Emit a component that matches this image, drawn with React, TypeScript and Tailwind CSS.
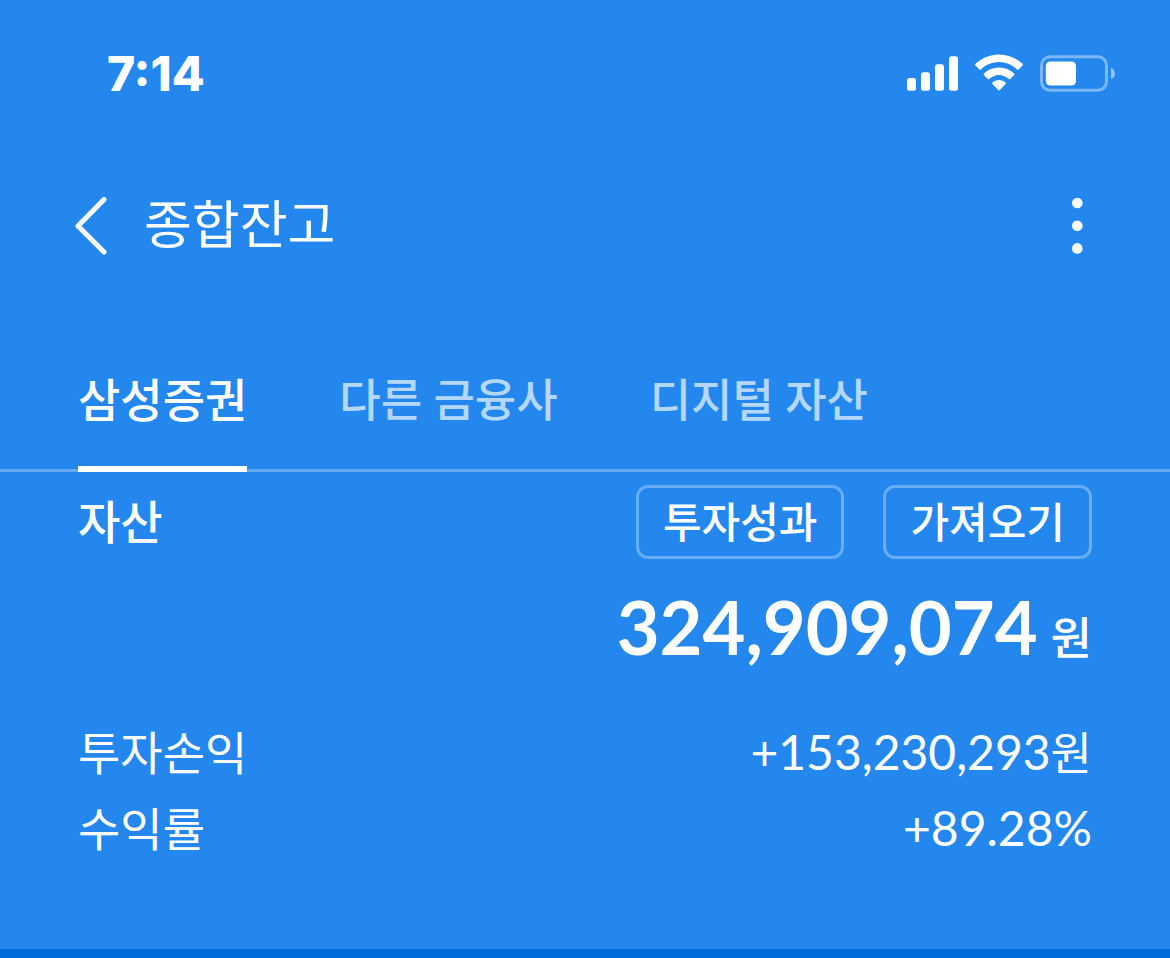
import { useState } from "react"

const tabs = ["삼성증권", "다른 금융사", "디지털 자산"]

const actions = ["투자성과", "가져오기"]

const results = [
  { label: "투자손익", value: "+153,230,293", unit: "원" },
  { label: "수익률", value: "+89.28%", unit: "" },
]

function StatusBar() {
  return (
    <div className="flex h-[148px] items-center justify-between pl-[107px] pr-[55px]">
      <span className="font-['Inter'] text-[48px] leading-[56px] font-extrabold">7:14</span>
      <div className="flex items-center gap-[17px]">
        <svg className="h-9 w-[51px]" viewBox="0 0 51 36" fill="currentColor" aria-hidden="true">
          <rect x="0" y="22" width="9" height="12.700" rx="2.500" />
          <rect x="14" y="16.300" width="9" height="18.400" rx="2.500" />
          <rect x="28" y="8.300" width="9" height="26.400" rx="2.500" />
          <rect x="42" y=".3" width="9" height="34.400" rx="2.500" />
        </svg>
        <svg className="h-10 w-12" viewBox="0 0 48 40" fill="currentColor" aria-hidden="true">
          <path d="M24 .4C15 .4 6.800 3.900.5 9.800q-.8.800 0 1.600L4.400 15.600q.7.700 1.500 0C10.700 10.900 17 8.100 24 8.100s13.300 2.800 18.100 7.500q.8.700 1.500 0l3.900-4.200q.8-.8 0-1.600C41.200 3.900 33 .4 24 .4Z" />
          <path d="M24 13.500c-5.800 0-11 2.200-15.100 5.900q-.8.800 0 1.600l3.800 4.100q.7.700 1.500 0c2.600-2.600 6-4.200 9.800-4.200s7.200 1.600 9.800 4.200q.8.700 1.500 0l3.800-4.100q.8-.8 0-1.600C35 15.700 29.800 13.500 24 13.500Z" />
          <path d="M24 26c-2.500 0-4.800.900-6.500 2.400q-.8.800 0 1.600l5.600 6.100q.9.900 1.800 0l5.600-6.100q.8-.8 0-1.600C28.800 26.900 26.500 26 24 26Z" />
        </svg>
        <svg className="h-[38px] w-[75px]" viewBox="0 0 75 38" aria-hidden="true">
          <rect x="1.500" y="1.700" width="65" height="33.500" rx="8.500" fill="none" stroke="currentColor" strokeOpacity=".4" strokeWidth="3" />
          <rect x="5.800" y="6.400" width="30.200" height="24.200" rx="4.500" fill="currentColor" />
          <path d="M71 12.700c5.300 2 5.300 9.600 0 11.600Z" fill="currentColor" fillOpacity=".5" />
        </svg>
      </div>
    </div>
  )
}

function Header() {
  return (
    <header className="flex h-[156px] items-center justify-between pl-[74px] pr-[70px]">
      <div className="flex items-center gap-9">
        <button type="button" aria-label="뒤로">
          <svg className="h-[60px] w-[34px]" viewBox="0 0 34 60" fill="none" stroke="currentColor" strokeWidth="5" strokeLinecap="round" strokeLinejoin="round" aria-hidden="true">
            <path d="M30 3.500 4 30l26 26" />
          </svg>
        </button>
        <h1 className="pb-1 text-[52px] leading-[64px]">종합잔고</h1>
      </div>
      <button type="button" aria-label="메뉴">
        <svg className="h-[60px] w-[46px]" viewBox="0 0 46 60" fill="currentColor" aria-hidden="true">
          <circle cx="23.300" cy="7" r="5.300" />
          <circle cx="23.300" cy="29.700" r="5.300" />
          <circle cx="23.300" cy="52.400" r="5.300" />
        </svg>
      </button>
    </header>
  )
}

export default function App() {
  const [activeTab, setActiveTab] = useState(tabs[0])

  return (
    <div className="flex min-h-screen flex-col border-b-9 border-[#006bda] bg-[#2387ed] font-['Lato','Noto_Sans_CJK_KR',sans-serif] text-white">
      <StatusBar />
      <Header />

      <nav className="mt-[53px] flex gap-[92px] border-b-3 border-[#62aaf5] px-[78px]" role="tablist">
        {tabs.map((tab) => (
          <button
            key={tab}
            type="button"
            role="tab"
            aria-selected={tab === activeTab}
            onClick={() => setActiveTab(tab)}
            className={
              tab === activeTab
                ? "-mb-[3px] h-[115px] border-b-6 border-white pb-6 text-[46px] leading-[56px] font-medium"
                : "-mb-[3px] h-[115px] border-b-6 border-transparent pb-6 text-[45px] leading-[56px] font-medium text-[#b4d7fc]"
            }
          >
            {tab}
          </button>
        ))}
      </nav>

      <main className="px-[78px] pt-[13px]">
        <section>
          <div className="flex items-center justify-between">
            <h2 className="text-[46px] leading-[56px] font-medium">자산</h2>
            <div className="flex gap-[39px]">
              {actions.map((action) => (
                <button key={action} type="button" className="h-[74px] rounded-xl border-3 border-[#66adf5] px-6 text-[42px] leading-[56px] font-medium">
                  {action}
                </button>
              ))}
            </div>
          </div>
          <p className="mt-6 flex items-baseline justify-end gap-[13px]">
            <strong className="text-[74px] leading-[88px] font-bold">324,909,074</strong>
            <span className="text-[45px] leading-[56px] font-medium">원</span>
          </p>
        </section>

        <dl className="mt-[45px] flex flex-col gap-[3px]">
          {results.map((item) => (
            <div key={item.label} className="flex items-center justify-between">
              <dt className="text-[46px] leading-[72px]">{item.label}</dt>
              <dd className="text-[48px] leading-[72px]">
                {item.value}
                <span className="text-[45px]">{item.unit}</span>
              </dd>
            </div>
          ))}
        </dl>
      </main>
    </div>
  )
}
